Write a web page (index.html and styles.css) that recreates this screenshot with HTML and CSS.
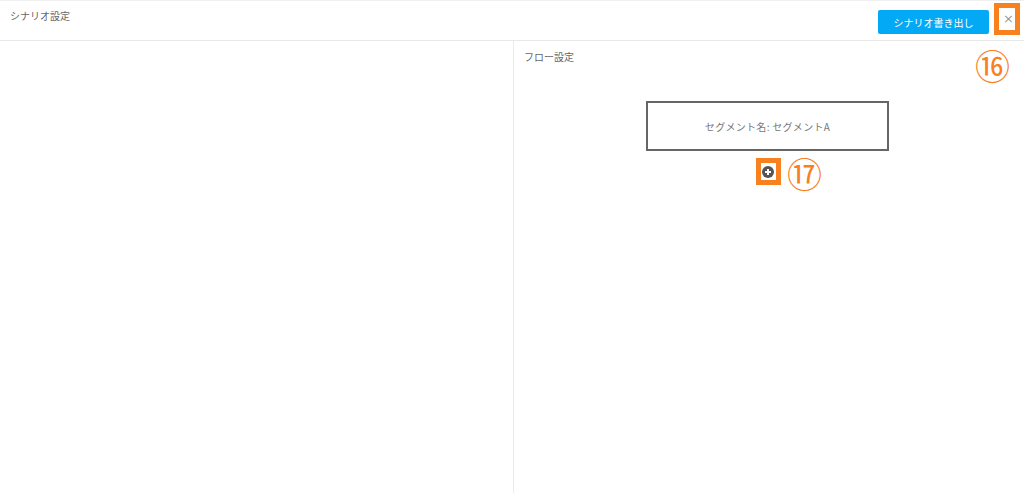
FILE: index.html
```html
<!DOCTYPE html>
<html lang="ja">
<head>
    <meta charset="UTF-8">
    <meta name="viewport" content="width=device-width, initial-scale=1.0">
    <title>シナリオ設定</title>
    <link rel="stylesheet" href="styles.css">
</head>
<body>
    <div class="page">
        <header class="header">
            <div class="title">シナリオ設定</div>
            <div class="actions">
                <button class="export-btn">シナリオ書き出し</button>
                <span class="close">×</span>
            </div>
        </header>

        <div class="main">
            <div class="left-pane"></div>
            <div class="right-pane">
                <div class="pane-title">フロー設定</div>
                <div class="flow">
                    <div class="segment">セグメント名: セグメントA</div>
                    <div class="add-btn">
                        <svg width="12" height="12" viewBox="0 0 12 12">
                            <circle cx="6" cy="6" r="6" fill="#555"/>
                            <path d="M6 3v6M3 6h6" stroke="#fff" stroke-width="2"/>
                        </svg>
                    </div>
                </div>
            </div>
        </div>

        <!-- annotations -->
        <div class="mark mark-close"></div>
        <div class="num num-16">⑯</div>
        <div class="mark mark-add"></div>
        <div class="num num-17">⑰</div>
    </div>
</body>
</html>
```

FILE: styles.css
```css
* {
    margin: 0;
    padding: 0;
    box-sizing: border-box;
}

body {
    font-family: "Noto Sans CJK JP", "Noto Sans", sans-serif;
    background-color: #fff;
    color: #666;
    font-size: 10px;
}

.page {
    position: relative;
    width: 1024px;
    height: 493px;
    border-top: 1px solid #f0f0f0;
    display: flex;
    flex-direction: column;
}

.header {
    height: 40px;
    border-bottom: 1px solid #e8e8e8;
    display: flex;
    justify-content: space-between;
    padding: 8px 0 0 10px;
}

.title {
    line-height: 14px;
}

.actions {
    display: flex;
    align-items: flex-start;
}

.export-btn {
    margin-top: 1px;
    width: 111px;
    height: 24px;
    background-color: #03a9f4;
    color: #fff;
    border: none;
    border-radius: 2px;
    font-family: inherit;
    font-size: 10px;
}

.close {
    width: 35px;
    padding-left: 4px;
    text-align: center;
    color: #999;
    font-family: "DejaVu Sans", sans-serif;
    font-size: 13px;
    line-height: 14px;
    margin-top: 3px;
}

.main {
    flex: 1;
    display: flex;
}

.left-pane {
    width: 514px;
    border-right: 1px solid #ebebeb;
}

.right-pane {
    flex: 1;
    padding: 9px 0 0 10px;
}

.pane-title {
    line-height: 14px;
}

.flow {
    display: flex;
    flex-direction: column;
    align-items: center;
    margin-top: 37px;
    padding-right: 13px;
}

.segment {
    width: 243px;
    height: 50px;
    border: 2px solid #666;
    display: flex;
    align-items: center;
    justify-content: center;
    color: #777;
    letter-spacing: 0.3px;
}

.add-btn {
    margin-top: 15px;
    width: 12px;
    height: 12px;
    display: flex;
}

.mark {
    position: absolute;
    border: 5px solid #f7801f;
}

.mark-close {
    left: 994px;
    top: 2px;
    width: 26px;
    height: 32px;
}

.mark-add {
    left: 756px;
    top: 157px;
    width: 25px;
    height: 27px;
}

.num {
    position: absolute;
    color: #f7801f;
    font-size: 35px;
    line-height: 35px;
}

.num-16 {
    left: 975px;
    top: 46px;
}

.num-17 {
    left: 787px;
    top: 154px;
}
```
